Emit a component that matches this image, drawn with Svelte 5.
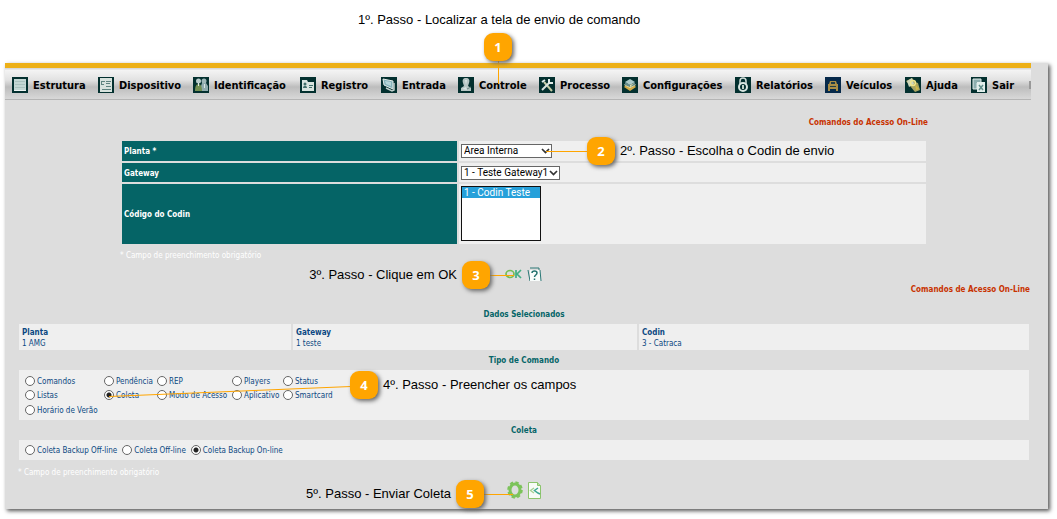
<script>
  const menu = ['Estrutura', 'Dispositivo', 'Identificação', 'Registro', 'Entrada', 'Controle', 'Processo', 'Configurações', 'Relatórios', 'Veículos', 'Ajuda', 'Sair'];

  const comandos = [
    ['Comandos', 'Pendência', 'REP', 'Players', 'Status'],
    ['Listas', 'Coleta', 'Modo de Acesso', 'Aplicativo', 'Smartcard'],
    ['Horário de Verão'],
  ];
  const coletas = ['Coleta Backup Off-line', 'Coleta Off-line', 'Coleta Backup On-line'];

  const passos = [
    { n: 1, x: 484, y: 33 },
    { n: 2, x: 587, y: 137, texto: 'Escolha o Codin de envio' },
    { n: 3, x: 462, y: 261, texto: 'Clique em OK', antes: true },
    { n: 4, x: 350, y: 371, texto: 'Preencher os campos' },
    { n: 5, x: 456, y: 480, texto: 'Enviar Coleta', antes: true },
  ];

  let comando = $state('Coleta');
  let coleta = $state('Coleta Backup On-line');
  let planta = $state('Area Interna');
  let gateway = $state('1 - Teste Gateway1');
  let codin = $state(['1 - Codin Teste']);
</script>

{#snippet icone(nome)}
  <svg class="icone" viewBox="0 0 16 16" width="16" height="16" aria-hidden="true">
    <rect width="16" height="16" fill={nome === 'Veículos' ? '#06294a' : '#03302f'} />
    {#if nome === 'Estrutura'}
      <rect x="2" y="2" width="12" height="12" fill="#c3d6d3" />
      <path d="M3 4.5h10M3 7.5h10M3 10.5h10" stroke="#a9c1bd" />
      <path d="M2 13.5h12" stroke="#eef5f3" />
    {:else if nome === 'Dispositivo'}
      <path d="M2 1h12v14H2z" fill="#d7e2dd" />
      <path d="M3 4.5h4M3.500 4v4M3 7.5h3M8 4.5h5M8 6.5h4M8 9.5h5M4 12.5h9" stroke="#5d827e" />
    {:else if nome === 'Identificação'}
      <circle cx="5.5" cy="4" r="2.5" fill="#b9cdcc" />
      <circle cx="11" cy="4" r="2.5" fill="#9fb8b9" />
      <path d="M8 13V9l1-3h4l2 3v5H9z" fill="#8eabad" />
      <path d="M2 14c0-4 1-7 3.500-7S9 10 9 14z" fill="#728f52" />
      <path d="M5 6h1v3H5zM11 7h1v4h-1z" fill="#dbe6e4" />
    {:else if nome === 'Registro'}
      <path d="M2 3h5l1 2h6v9H2z" fill="#d8e4df" />
      <circle cx="5" cy="7" r="1.5" fill="#41706b" />
      <path d="M3 11c0-3 4-3 4 0zM9 8h4v1H9zM9 10h3v1H9z" fill="#41706b" />
    {:else if nome === 'Entrada'}
      <path d="M2 2l10 2v8L3 8z" fill="#86b3ba" stroke="#e4eeeb" />
      <path d="M4 4l6 1v4L5 7z" fill="#b5d6d9" />
      <path d="M5 11l6 3 2-1V6" fill="none" stroke="#c0d0cd" stroke-width="1.5" />
    {:else if nome === 'Controle'}
      <path d="M8 1c3 0 4 2 3 5l-1 3 3 2v3H3v-3l3-2-1-3C4 3 5 1 8 1z" fill="#b5c5c3" />
      <path d="M7 3h2l-1 5zM4 12l4-2 1 3z" fill="#d9e5e3" />
      <path d="M9 12l4-2" stroke="#688580" />
    {:else if nome === 'Processo'}
      <path d="M5 5l8 9" stroke="#c4cda6" stroke-width="2" />
      <path d="M3 13l8-8" stroke="#dae4df" stroke-width="2" />
      <path d="M10 2v4h4M3 5l3-2" fill="none" stroke="#e3eeea" stroke-width="2" />
    {:else if nome === 'Configurações'}
      <path d="M2 10l6 4 6-4-2-2-4 2-4-2z" fill="#d1aa49" />
      <path d="M2 8l6 3 6-3-2-2-4 2-4-2z" fill="#e3e2ae" />
      <path d="M3 5l5-3 5 3-5 3z" fill="#abc9c8" />
      <path d="M3 5v3l5 2V8zM13 5v3l-5 2" fill="#62898b" />
    {:else if nome === 'Relatórios'}
      <path d="M5 8V4q0-3 3-3t3 3v4" fill="none" stroke="#d0ddd9" stroke-width="1.5" />
      <circle cx="8" cy="10" r="4" fill="none" stroke="#d7e5e1" stroke-width="2" />
      <path d="M7 8h2v4H7z" fill="#bfd2ca" />
    {:else if nome === 'Veículos'}
      <path d="M5 4h6l1 3h1v7h-2v-2H5v2H3V7h1z" fill="#a98d45" />
      <path d="M6 5h4v2H6zM5 9h6v1H5z" fill="#223e47" />
    {:else if nome === 'Ajuda'}
      <path d="M1 4l6-3 3 4 3 1 2 7-5 2z" fill="#a9a461" />
      <path d="M2 4l5-3 2 6-5 3z" fill="#ced6bd" />
      <circle cx="8" cy="6" r="2.5" fill="none" stroke="#f1e58c" stroke-width="1.5" />
      <path d="M10 7l4 5-3 1z" fill="#d0b847" />
    {:else if nome === 'Sair'}
      <path d="M2 2h8v4H6v6H2z" fill="#8caeae" stroke="#dfebe9" />
      <path d="M6 5h8v10H6z" fill="#e1eeeb" />
      <path d="M8 8l4 5M12 8l-4 5" stroke="#5e8d89" stroke-width="1.5" />
    {/if}
  </svg>
{/snippet}

{#snippet seta()}
  <svg class="seta" viewBox="0 0 9 6" width="9" height="6" aria-hidden="true">
    <path d="M1 1l3.5 3.5L8 1" fill="none" stroke="#333" stroke-width="1.7" />
  </svg>
{/snippet}

<div class="pagina">
  <p class="passo1">1º. Passo - Localizar a tela de envio de comando</p>

  <main>
    <nav>
      {#each menu as item}
        <a href="#{item}">{@render icone(item)}<span>{item}</span></a>
      {/each}
    </nav>

    <section class="acesso">
      <h1>Comandos do Acesso On-Line</h1>
      <div class="linha">
        <label for="planta">Planta *</label>
        <div class="campo">
          <span class="combo planta">
            <select id="planta" bind:value={planta}><option>Area Interna</option></select>
            {@render seta()}
          </span>
        </div>
      </div>
      <div class="linha">
        <label for="gateway">Gateway</label>
        <div class="campo">
          <span class="combo gateway">
            <select id="gateway" bind:value={gateway}><option>1 - Teste Gateway1</option></select>
            {@render seta()}
          </span>
        </div>
      </div>
      <div class="linha alta">
        <label for="codin">Código do Codin</label>
        <div class="campo">
          <select id="codin" class="lista" multiple size="4" bind:value={codin}><option>1 - Codin Teste</option></select>
        </div>
      </div>
      <p class="nota">* Campo de preenchimento obrigatório</p>
    </section>

    <div class="acoes">
      <button aria-label="OK">
        <svg viewBox="0 0 17 10" width="17" height="10">
          <ellipse cx="5" cy="5" rx="4" ry="3.5" fill="none" stroke="#74bd56" stroke-width="1.7" />
          <path d="M11 1v8M16 1l-4 4 4 4" fill="none" stroke="#42ae83" stroke-width="1.7" />
        </svg>
      </button>
      <button aria-label="Ajuda">
        <svg viewBox="0 0 15 15" width="15" height="15">
          <path d="M1 3l2 11M3 1h9v2" fill="none" stroke="#2a7775" />
          <path d="M3 3h10l1 11H3z" fill="#f8fcfb" />
          <path d="M13 3l1 11" stroke="#2a7775" />
          <path d="M5 6q0-2 2.5-2T10 6c0 2-2.5 2-2.5 4M7.5 11.5V13" fill="none" stroke="#22716e" stroke-width="1.5" />
        </svg>
      </button>
    </div>

    <section class="envio">
      <h1>Comandos de Acesso On-Line</h1>
      <h2>Dados Selecionados</h2>
      <dl>
        <div><dt>Planta</dt><dd>1 AMG</dd></div>
        <div><dt>Gateway</dt><dd>1 teste</dd></div>
        <div><dt>Codin</dt><dd>3 - Catraca</dd></div>
      </dl>
      <h2>Tipo de Comando</h2>
      <div class="caixa comandos">
        {#each comandos as linha}
          <div class="opcoes">
            {#each linha as nome}
              <label><input type="radio" name="comando" value={nome} bind:group={comando} />{nome}</label>
            {/each}
          </div>
        {/each}
      </div>
      <h2>Coleta</h2>
      <div class="caixa coletas">
        {#each coletas as nome}
          <label><input type="radio" name="coleta" value={nome} bind:group={coleta} />{nome}</label>
        {/each}
      </div>
      <p class="nota">* Campo de preenchimento obrigatório</p>
    </section>

    <div class="acoes fim">
      <button aria-label="Enviar">
        <svg viewBox="0 0 16 18" width="16" height="18">
          <ellipse cx="8" cy="9" rx="5" ry="6" fill="none" stroke="#7cc35a" stroke-width="3" />
          <ellipse cx="8" cy="9" rx="6.5" ry="7.5" fill="none" stroke="#7cc35a" stroke-width="2.5" stroke-dasharray="3.2 2.3" />
        </svg>
      </button>
      <button aria-label="Voltar">
        <svg viewBox="0 0 13 17" width="13" height="17">
          <path d="M.5.5h9l3 3v13H.5z" fill="#f8fbf6" stroke="#8cc46c" />
          <path d="M9.5.5v3h3" fill="#b9dca8" stroke="#8cc46c" />
          <path d="M6 6L2.500 8.500 6 11" fill="none" stroke="#a5cf90" stroke-width="1.3" />
          <path d="M10 6L6.500 8.500 10 11l2 1" fill="none" stroke="#3fa893" stroke-width="1.5" />
        </svg>
      </button>
    </div>
  </main>

  <svg class="tracos" aria-hidden="true">
    <path d="M498.5 60V84M546 151.5H588M489 275.5H514M109 396.5L351 386.5M483 494.5H513" />
  </svg>
  {#each passos as p}
    <div class="passo" class:antes={p.antes} style="left: {p.x}px; top: {p.y}px">
      <b>{p.n}</b>
      {#if p.texto}<span>{p.n}º. Passo - {p.texto}</span>{/if}
    </div>
  {/each}
</div>

<style>
  :global(body) {
    margin: 0;
    background: #fff;
  }
  .pagina {
    position: relative;
    padding: 12px 9px 10px 5px;
    font-family: "DejaVu Sans Condensed", "DejaVu Sans", sans-serif;
    font-size: 8px;
    line-height: 10px;
    color: #0b4882;
  }
  p, h1, h2, dl, dd {
    margin: 0;
  }
  .passo1 {
    height: 51px;
    padding-left: 353px;
    font: 13px/16px "Liberation Sans", Arial, sans-serif;
    color: #000;
  }
  main {
    background: #ddd;
    box-shadow: 2px 2px 4px #555;
    padding-bottom: 10px;
  }
  nav {
    display: grid;
    grid-template-columns: 86fr 95fr 107fr 81fr 77fr 81fr 83fr 113fr 90fr 80fr 66fr 60fr;
    align-items: center;
    height: 31px;
    margin-right: 17px;
    padding-left: 7px;
    border-top: 5px solid #edb017;
    border-bottom: 1px solid #b5b5b5;
    background:
      linear-gradient(#999, #999) right 13px / 2px 8px no-repeat,
      linear-gradient(#d8d8d8 0 1px, #f4f4f4 2px, #e2e2e2 12px, #bdbdbd 19px, #d8d8d8);
  }
  nav a {
    display: flex;
    align-items: center;
    gap: 5px;
    min-width: 0;
    padding-top: 2px;
    color: #000;
    font-size: 11px;
    font-weight: bold;
    text-decoration: none;
    white-space: nowrap;
  }
  nav span {
    padding-top: 2px;
  }
  .icone {
    flex: none;
  }
  h1 {
    font-size: 8px;
    line-height: 10px;
    text-align: right;
    color: #c83200;
  }
  h2 {
    padding-top: 2px;
    font-size: 8px;
    line-height: 18px;
    text-align: center;
    color: #056568;
  }
  .acesso {
    margin: 18px 122px 0 117px;
  }
  .acesso h1 {
    margin: 0 -2px 13px 0;
  }
  .linha {
    display: grid;
    grid-template-columns: 335fr 467fr;
    gap: 2px;
    min-height: 20px;
    margin-bottom: 2px;
  }
  .linha:nth-of-type(2) {
    min-height: 19px;
  }
  .linha.alta {
    min-height: 60px;
  }
  .linha > label {
    display: flex;
    align-items: center;
    padding: 2px 0 0 2px;
    background: #056466;
    color: #fff;
    font-weight: bold;
  }
  .campo {
    display: flex;
    align-items: center;
    padding-left: 2px;
    background: #efefef;
  }
  .alta .campo {
    align-items: flex-start;
    padding-top: 2px;
  }
  .combo {
    position: relative;
    display: block;
    height: 14px;
  }
  .planta {
    width: 91px;
  }
  .gateway {
    width: 99px;
  }
  select {
    appearance: none;
    box-sizing: border-box;
    display: block;
    width: 100%;
    height: 14px;
    margin: 0;
    padding: 0 2px;
    border: 1px solid #666;
    border-radius: 0;
    background: #fff;
    color: #000;
    font: 10px/12px Roboto, "Liberation Sans", sans-serif;
  }
  .seta {
    position: absolute;
    right: 2px;
    top: 4px;
    pointer-events: none;
  }
  .lista {
    width: 80px;
    height: 55px;
    padding: 0;
    border-color: #111;
    overflow: hidden;
  }
  .lista option {
    min-height: 11px;
    padding: 0 2px;
    line-height: 11px;
  }
  .lista option:checked {
    background: linear-gradient(#26a0da, #26a0da);
    -webkit-text-fill-color: #fff;
  }
  .nota {
    color: #fff;
  }
  .acesso .nota {
    margin: 7px 0 0 -2px;
  }
  .acoes {
    display: flex;
    justify-content: center;
    align-items: center;
    gap: 5px;
    height: 16px;
    margin-top: 5px;
    padding-right: 6px;
  }
  .acoes.fim {
    height: 18px;
    margin-top: 3px;
  }
  button {
    display: flex;
    padding: 0;
    border: 0;
    background: none;
    cursor: pointer;
  }
  .envio {
    margin: 3px 19px 0 14px;
  }
  .envio h1 {
    margin: 0 -1px 9px 0;
  }
  dl {
    display: grid;
    grid-template-columns: 272fr 344fr 390fr;
    gap: 2px;
    line-height: 11px;
  }
  dl div {
    padding: 3px 3px 1px;
    background: #efefef;
  }
  dt {
    font-weight: bold;
  }
  .caixa {
    background: #efefef;
  }
  .comandos {
    padding: 5px 6px 1px;
  }
  .opcoes {
    display: grid;
    grid-template-columns: 79px 53px 75px 51px 1fr;
    line-height: 14px;
    padding-bottom: 1px;
  }
  .opcoes:first-child {
    padding-bottom: 0;
  }
  .opcoes label:only-child {
    grid-column: span 2;
  }
  .caixa label {
    display: flex;
    align-items: center;
    gap: 2px;
    white-space: nowrap;
  }
  .coletas {
    display: flex;
    gap: 5px;
    padding: 2px 6px 0;
    line-height: 18px;
  }
  input {
    appearance: none;
    flex: none;
    box-sizing: border-box;
    width: 10px;
    height: 10px;
    margin: 0 0 2px;
    border: 1px solid #666;
    border-radius: 50%;
    background: #fff;
  }
  input:checked {
    background: radial-gradient(circle, #222 0 2px, #fff 3px);
  }
  .envio .nota {
    margin: 8px 0 0 -1px;
  }
  .tracos {
    position: absolute;
    inset: 0;
    width: 100%;
    height: 100%;
    fill: none;
    stroke: #ffa500;
    pointer-events: none;
  }
  .passo {
    position: absolute;
    display: flex;
    align-items: center;
    gap: 5px;
    color: #000;
    font: 13px/16px "Liberation Sans", Arial, sans-serif;
    white-space: nowrap;
  }
  .passo b {
    width: 28px;
    border-radius: 9px;
    background: #ffa500;
    box-shadow: 2px 2px 4px #666;
    color: #fff;
    font: bold 13px/28px "Open Sans", sans-serif;
    text-align: center;
  }
  .antes span {
    position: absolute;
    right: 100%;
    margin-right: 5px;
  }
</style>
